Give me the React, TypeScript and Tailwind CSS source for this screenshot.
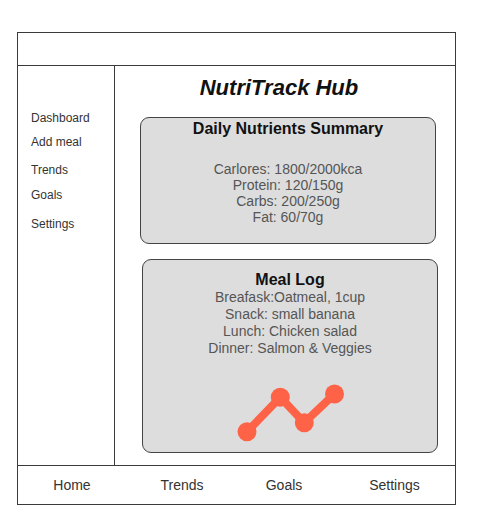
const sideItems = [
  { label: 'Dashboard', mt: 'mt-0' },
  { label: 'Add meal', mt: 'mt-[10px]' },
  { label: 'Trends', mt: 'mt-[14px]' },
  { label: 'Goals', mt: 'mt-[11px]' },
  { label: 'Settings', mt: 'mt-[15px]' },
]

const nutrients = [
  'Carlores: 1800/2000kca',
  'Protein: 120/150g',
  'Carbs: 200/250g',
  'Fat: 60/70g',
]

const meals = [
  'Breafask:Oatmeal, 1cup',
  'Snack: small banana',
  'Lunch: Chicken salad',
  'Dinner: Salmon & Veggies',
]

function TrendChart() {
  const pts: [number, number][] = [
    [11, 48.7],
    [44.3, 14.3],
    [68.3, 39.7],
    [98.5, 11],
  ]
  return (
    <svg width="110" height="60" viewBox="0 0 110 60" className="ml-[93px] mt-[26px] block">
      <polyline
        points={pts.map((p) => p.join(',')).join(' ')}
        fill="none"
        stroke="#ff6347"
        strokeWidth="8"
        strokeLinejoin="round"
      />
      {pts.map(([x, y]) => (
        <circle key={x} cx={x} cy={y} r="9.5" fill="#ff6347" />
      ))}
    </svg>
  )
}

export default function App() {
  return (
    <div className="min-h-[521px] bg-white pl-[17px] pt-[32px] font-['Liberation_Sans',Arial,sans-serif]">
      <div className="flex h-[473px] w-[439px] flex-col border border-[#3a3a3a]">
        <header className="h-[33px] shrink-0 border-b border-[#3a3a3a]" />

        <div className="flex h-[399px] shrink-0">
          <aside className="w-[97px] shrink-0 border-r border-[#3a3a3a] pl-[13px] pt-[45px]">
            <ul>
              {sideItems.map((item) => (
                <li key={item.label} className={`${item.mt} text-[12px] leading-[14px] text-[#333]`}>
                  {item.label}
                </li>
              ))}
            </ul>
          </aside>

          <main className="flex-1 pt-[9px]">
            <h1 className="pr-[12px] text-center text-[22px] font-bold italic leading-[26px] text-[#111]">
              NutriTrack Hub
            </h1>

            <section className="ml-[25px] mt-[16px] h-[127px] w-[296px] rounded-[9px] border border-[#444] bg-[#dddddd] pt-[2px] text-center">
              <h2 className="text-[16px] font-bold leading-[18px] text-[#111]">Daily Nutrients Summary</h2>
              <div className="mt-[23px] text-[14px] leading-[16px] text-[#555]">
                {nutrients.map((n) => (
                  <p key={n}>{n}</p>
                ))}
              </div>
            </section>

            <section className="ml-[27px] mt-[15px] h-[194px] w-[296px] rounded-[9px] border border-[#444] bg-[#dddddd] pt-[11px]">
              <h2 className="text-center text-[16px] font-bold leading-[18px] text-[#111]">Meal Log</h2>
              <div className="text-center text-[14px] leading-[17px] text-[#555]">
                {meals.map((m) => (
                  <p key={m}>{m}</p>
                ))}
              </div>
              <TrendChart />
            </section>
          </main>
        </div>

        <footer className="grid flex-1 grid-cols-[108px_112px_92px_1fr] items-center border-t border-[#3a3a3a] text-[14px] leading-[16px] text-[#333]">
          <span className="text-center">Home</span>
          <span className="text-center">Trends</span>
          <span className="text-center">Goals</span>
          <span className="pl-[4px] text-center">Settings</span>
        </footer>
      </div>
    </div>
  )
}
